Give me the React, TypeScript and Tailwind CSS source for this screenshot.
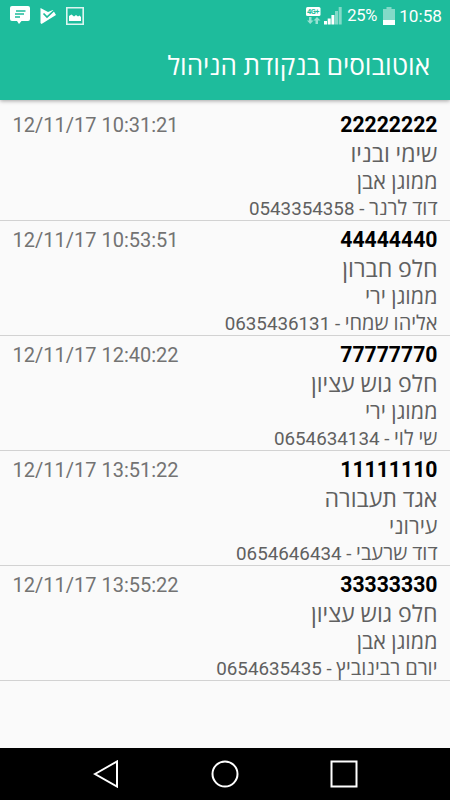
import React from 'react';

interface Bus {
  plate: string;
  time: string;
  company: string;
  type: string;
  driver: string;
  phone: string;
}

const buses: Bus[] = [
  { plate: '22222222', time: '12/11/17 10:31:21', company: 'שימי ובניו', type: 'ממוגן אבן', driver: 'דוד לרנר', phone: '0543354358' },
  { plate: '44444440', time: '12/11/17 10:53:51', company: 'חלפ חברון', type: 'ממוגן ירי', driver: 'אליהו שמחי', phone: '0635436131' },
  { plate: '77777770', time: '12/11/17 12:40:22', company: 'חלפ גוש עציון', type: 'ממוגן ירי', driver: 'שי לוי', phone: '0654634134' },
  { plate: '11111110', time: '12/11/17 13:51:22', company: 'אגד תעבורה', type: 'עירוני', driver: 'דוד שרעבי', phone: '0654646434' },
  { plate: '33333330', time: '12/11/17 13:55:22', company: 'חלפ גוש עציון', type: 'ממוגן אבן', driver: 'יורם רבינוביץ', phone: '0654635435' },
];

const StatusBar = () => (
  <div className="flex h-8 items-center justify-between pl-[10px] pr-2 text-white">
    {/* Notifications */}
    <div className="flex items-center">
      <svg width="20" height="20" viewBox="0 0 20 20">
        <path d="M2 0h16a2 2 0 0 1 2 2v11a2 2 0 0 1-2 2h-6.5L9 18 7 15H2a2 2 0 0 1-2-2V2a2 2 0 0 1 2-2z" fill="white" />
        <path d="M6 5h9.500M5 8h9M5 11h5" stroke="#1ebc9c" strokeWidth="1.500" />
      </svg>
      <svg className="ml-[10px]" width="16" height="18" viewBox="0 0 16 18">
        <path d="M.5 1 8 5 13 3 16 8 1.500 17 .5 16z" fill="white" />
        <path d="m3.500 6.500 3.500 3.500L14 3.500" fill="none" stroke="#1ebc9c" strokeWidth="1.700" />
      </svg>
      <svg className="ml-[10px]" width="18" height="18" viewBox="0 0 18 18">
        <path d="M.8.8h16.400v16.400H.8z" fill="none" stroke="white" strokeOpacity=".85" strokeWidth="1.600" />
        <path d="M3 14V9l2.500-1.500 2.500 2 2-1.500 2 1.500 1.500-1L15 10v4z" fill="white" />
      </svg>
    </div>

    {/* Network, battery, clock */}
    <div className="flex items-center">
      <svg width="15" height="18" viewBox="0 0 15 18">
        <rect width="14.500" height="9" rx="1.500" fill="white" />
        <text x="7.200" y="7.300" textAnchor="middle" textLength="12.500" fontFamily="Roboto, sans-serif" fontSize="7.500" fontWeight="700" fill="#1ebc9c">4G+</text>
        <path d="M3 10h2.500v3.500h2L4.200 17 1 13.500h2zM9.500 17v-3.500h-2L11 10l3.500 3.500H12V17z" fill="white" fillOpacity=".55" />
      </svg>
      <svg className="ml-[3px]" width="18" height="18" viewBox="0 0 18 18">
        <path d="M0 14h3v3.500H0zM3.700 11.500h3v6h-3zM7.400 8h3v9.500h-3z" fill="white" />
        <path d="M11 4h3v13.500h-3zM14.700 0h3v17.500h-3z" fill="white" fillOpacity=".45" />
      </svg>
      <span className="ml-[5px] w-[31px] whitespace-nowrap text-[16.500px] leading-8 tracking-[-0.3px]">25%</span>
      <svg className="ml-[5px]" width="12" height="18" viewBox="0 0 12 18">
        <path d="M3.500 0h5v2H12v16H0V2h3.500z" fill="white" fillOpacity=".45" />
        <path d="M0 13h12v5H0z" fill="white" />
      </svg>
      <span className="ml-[4px] text-[17.200px] leading-8">10:58</span>
    </div>
  </div>
);

const BusRow = ({ bus }: { bus: Bus }) => (
  <li className="h-[115px] border-b border-[#d2d2d2] pl-[12.500px] pr-[12.500px] text-[#606060]">
    <div className="flex h-[37px] items-center justify-between">
      <span className="text-[21.200px] font-bold text-black">{bus.plate}</span>
      <span dir="ltr" className="text-[20px] text-[#737373]">{bus.time}</span>
    </div>
    <div className="text-[23.200px] leading-[22px]">{bus.company}</div>
    <div className="text-[21.500px] leading-[34px]">{bus.type}</div>
    <div className="text-[18.800px] leading-[19px]">
      <span className="text-[20px]">{bus.driver}</span> - {bus.phone}
    </div>
  </li>
);

const NavigationBar = () => (
  <nav className="flex h-[52px] items-center justify-between bg-black pl-[93px] pr-[92px]">
    <svg width="26" height="28" viewBox="0 0 26 28" fill="none" stroke="white" strokeWidth="2">
      <path d="M2 14 24 1.500v25z" />
    </svg>
    <svg width="28" height="28" viewBox="0 0 28 28" fill="none" stroke="white" strokeWidth="2">
      <circle cx="14" cy="14" r="12.500" />
    </svg>
    <svg width="28" height="28" viewBox="0 0 28 28" fill="none" stroke="white" strokeWidth="2">
      <path d="M1.500 1.500h25v25h-25z" />
    </svg>
  </nav>
);

export default function App() {
  return (
    <div className="flex h-[800px] w-[450px] flex-col overflow-hidden bg-[#fafafa] font-[Roboto,'Open_Sans',sans-serif]">
      <header className="h-[100px] shrink-0 bg-[#1ebc9c] shadow-[0_1px_4px_rgba(0,0,0,0.35)]">
        <StatusBar />
        <h1 dir="rtl" className="pr-[20px] text-[26.100px] leading-[69px] text-white">
          אוטובוסים בנקודת הניהול
        </h1>
      </header>

      <ul dir="rtl" className="flex-1 pt-[6px]">
        {buses.map((bus) => (
          <BusRow key={bus.plate} bus={bus} />
        ))}
      </ul>

      <NavigationBar />
    </div>
  );
}
